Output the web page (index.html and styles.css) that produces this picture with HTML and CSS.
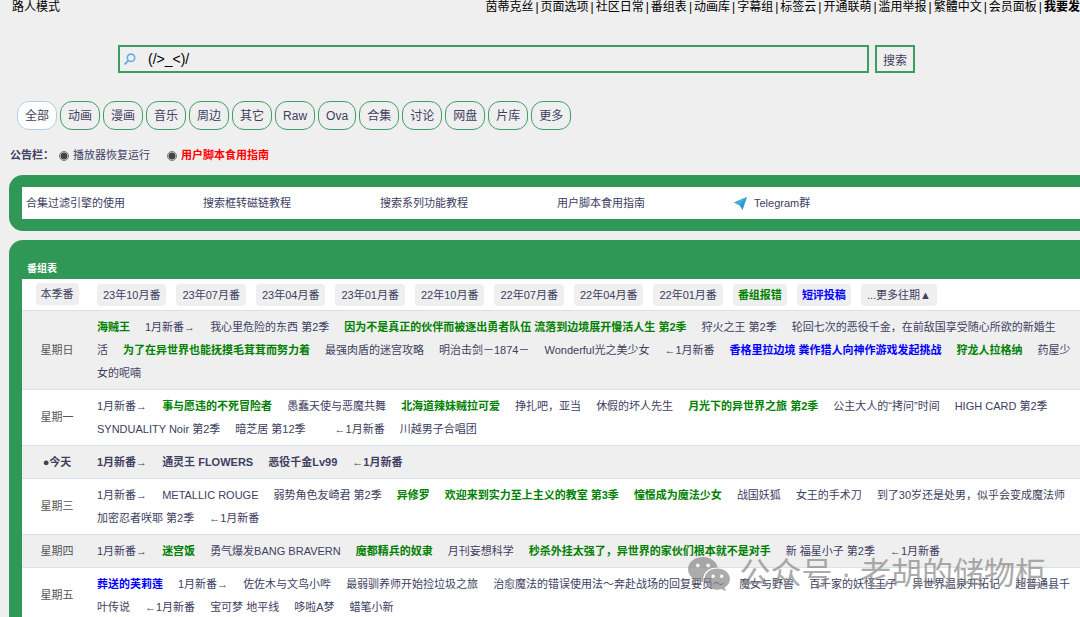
FILE: index.html
```html
<!DOCTYPE html>
<html lang="zh-CN">
<head>
<meta charset="utf-8">
<title>番组表</title>
<link rel="stylesheet" href="styles.css">
</head>
<body>
<header class="topbar">
  <span class="mode">路人模式</span>
  <nav class="topnav">
    <a href="#">茵蒂克丝</a><i>|</i><a href="#">页面选项</a><i>|</i><a href="#">社区日常</a><i>|</i><a href="#">番组表</a><i>|</i><a href="#">动画库</a><i>|</i><a href="#">字幕组</a><i>|</i><a href="#">标签云</a><i>|</i><a href="#">开通联萌</a><i>|</i><a href="#">滥用举报</a><i>|</i><a href="#">繁體中文</a><i>|</i><a href="#">会员面板</a><i>|</i><a href="#"><b>我要发</b></a>
  </nav>
</header>

<form class="search">
  <label class="search-box">
    <svg class="lens" viewBox="0 0 12 12" aria-hidden="true"><circle cx="7" cy="4.8" r="3.7" fill="#e4f1fc" stroke="#69ade8" stroke-width="1.6"/><path d="M4.300 7.600 1.200 10.800" stroke="#69ade8" stroke-width="2" stroke-linecap="round"/></svg>
    <input type="text" value="(/&gt;_&lt;)/" aria-label="搜索关键词">
  </label>
  <button class="search-btn" type="submit">搜索</button>
</form>

<div class="filters">
  <button class="pill active" type="button">全部</button>
  <button class="pill" type="button">动画</button>
  <button class="pill" type="button">漫画</button>
  <button class="pill" type="button">音乐</button>
  <button class="pill" type="button">周边</button>
  <button class="pill" type="button">其它</button>
  <button class="pill" type="button">Raw</button>
  <button class="pill" type="button">Ova</button>
  <button class="pill" type="button">合集</button>
  <button class="pill" type="button">讨论</button>
  <button class="pill" type="button">网盘</button>
  <button class="pill" type="button">片库</button>
  <button class="pill" type="button">更多</button>
</div>

<div class="bulletin">
  <b>公告栏：</b>
  <a href="#"><span class="dot"></span>播放器恢复运行</a>
  <a href="#" class="hot"><span class="dot"></span>用户脚本食用指南</a>
</div>

<section class="panel">
  <div class="guides">
    <a href="#">合集过滤引擎的使用</a>
    <a href="#">搜索框转磁链教程</a>
    <a href="#">搜索系列功能教程</a>
    <a href="#">用户脚本食用指南</a>
    <a href="#" class="telegram"><svg class="plane" viewBox="0 0 13 13" aria-hidden="true"><path d="M0 5.6 13 0 8.6 13 5.4 8.2Z" fill="#2b9bd3"/><path d="M0 5.6 13 0 5.4 8.2Z" fill="#45addb"/></svg>Telegram群</a>
  </div>
</section>

<section class="panel">
  <h2 class="panel-title">番组表</h2>
  <table class="schedule">
    <tbody>
      <tr>
        <th><a class="chip" href="#">本季番</a></th>
        <td><div class="chips">
          <a class="chip" href="#">23年10月番</a><a class="chip" href="#">23年07月番</a><a class="chip" href="#">23年04月番</a><a class="chip" href="#">23年01月番</a><a class="chip" href="#">22年10月番</a><a class="chip" href="#">22年07月番</a><a class="chip" href="#">22年04月番</a><a class="chip" href="#">22年01月番</a><a class="chip green" href="#">番组报错</a><a class="chip blue" href="#">短评投稿</a><a class="chip" href="#">...更多往期▲</a>
        </div></td>
      </tr>
      <tr>
        <th>星期日</th>
        <td class="shows"><a class="green" href="#">海贼王</a><a href="#">1月新番→</a><a href="#">我心里危险的东西 第2季</a><a class="green" href="#">因为不是真正的伙伴而被逐出勇者队伍 流落到边境展开慢活人生 第2季</a><a href="#">狩火之王 第2季</a><a href="#">轮回七次的恶役千金，在前敌国享受随心所欲的新婚生<br>活</a><a class="green" href="#">为了在异世界也能抚摸毛茸茸而努力着</a><a href="#">最强肉盾的迷宫攻略</a><a href="#">明治击剑－1874－</a><a href="#">Wonderful光之美少女</a><a href="#">←1月新番</a><a class="blue" href="#">香格里拉边境 粪作猎人向神作游戏发起挑战</a><a class="green" href="#">狩龙人拉格纳</a><a href="#">药屋少<br>女的呢喃</a></td>
      </tr>
      <tr>
        <th>星期一</th>
        <td class="shows"><a href="#">1月新番→</a><a class="green" href="#">事与愿违的不死冒险者</a><a href="#">愚蠢天使与恶魔共舞</a><a class="green" href="#">北海道辣妹贼拉可爱</a><a href="#">挣扎吧，亚当</a><a href="#">休假的坏人先生</a><a class="green" href="#">月光下的异世界之旅 第2季</a><a href="#">公主大人的“拷问”时间</a><a href="#">HIGH CARD 第2季</a><br><a href="#">SYNDUALITY Noir 第2季</a><a class="wide" href="#">暗芝居 第12季</a><a href="#">←1月新番</a><a href="#">川越男子合唱团</a></td>
      </tr>
      <tr class="today">
        <th>●今天</th>
        <td class="shows"><a href="#">1月新番→</a><a href="#">通灵王 FLOWERS</a><a href="#">恶役千金Lv99</a><a href="#">←1月新番</a></td>
      </tr>
      <tr>
        <th>星期三</th>
        <td class="shows"><a href="#">1月新番→</a><a href="#">METALLIC ROUGE</a><a href="#">弱势角色友崎君 第2季</a><a class="green" href="#">异修罗</a><a class="green" href="#">欢迎来到实力至上主义的教室 第3季</a><a class="green" href="#">憧憬成为魔法少女</a><a href="#">战国妖狐</a><a href="#">女王的手术刀</a><a href="#">到了30岁还是处男，似乎会变成魔法师</a><br><a href="#">加密忍者咲耶 第2季</a><a href="#">←1月新番</a></td>
      </tr>
      <tr>
        <th>星期四</th>
        <td class="shows"><a href="#">1月新番→</a><a class="green" href="#">迷宫饭</a><a href="#">勇气爆发BANG BRAVERN</a><a class="green" href="#">魔都精兵的奴隶</a><a href="#">月刊妄想科学</a><a class="green" href="#">秒杀外挂太强了，异世界的家伙们根本就不是对手</a><a href="#">新 福星小子 第2季</a><a href="#">←1月新番</a></td>
      </tr>
      <tr>
        <th>星期五</th>
        <td class="shows"><a class="blue" href="#">葬送的芙莉莲</a><a href="#">1月新番→</a><a href="#">佐佐木与文鸟小哔</a><a href="#">最弱驯养师开始捡垃圾之旅</a><a href="#">治愈魔法的错误使用法～奔赴战场的回复要员～</a><a href="#">魔女与野兽</a><a href="#">百千家的妖怪王子</a><a href="#">异世界温泉开拓记</a><a href="#">超普通县千<br>叶传说</a><a href="#">←1月新番</a><a href="#">宝可梦 地平线</a><a href="#">哆啦A梦</a><a href="#">蜡笔小新</a></td>
      </tr>
    </tbody>
  </table>
</section>

<div class="watermark">
  <svg class="wechat" viewBox="0 0 42 36" aria-hidden="true">
    <path fill="#888" fill-rule="evenodd" d="M15 1C6.500 1 0 6.400 0 13.300c0 3.900 2.100 7.200 5.300 9.500L4 27.500l5.200-2.700c1.800.6 3.800.9 5.800.9h.8c-.3-1-.5-2-.5-3 0-6.500 6-11.300 13.700-11.300h.8C28.500 5.400 22.300 1 15 1ZM9.800 7.500a2 2 0 1 1 0 4 2 2 0 0 1 0-4Zm10.400 0a2 2 0 1 1 0 4 2 2 0 0 1 0-4Z"/>
    <path fill="#888" fill-rule="evenodd" d="M29.300 12.500c-7 0-12.700 4.700-12.700 10.600s5.700 10.600 12.700 10.600c1.500 0 3-.2 4.300-.6l4.200 2.200-1.100-3.800c3.200-2 5.300-5 5.300-8.400 0-5.900-5.700-10.600-12.700-10.600Zm-4.200 6a1.700 1.700 0 1 1 0 3.400 1.700 1.700 0 0 1 0-3.400Zm8.600 0a1.700 1.700 0 1 1 0 3.400 1.700 1.700 0 0 1 0-3.400Z"/>
  </svg>
  <span>公众号 · 老胡的储物柜</span>
</div>
</body>
</html>
```

FILE: styles.css
```css
* { box-sizing: border-box; }

html { overflow: hidden; }

body {
  margin: 0;
  height: 100vh;
  overflow: hidden;
  background: #efefef;
  color: #404060;
  font: 11px/23px "Liberation Sans", "Noto Sans CJK SC", sans-serif;
}

a { color: inherit; text-decoration: none; }

button, input { font: inherit; color: inherit; }

.topbar {
  display: flex;
  justify-content: space-between;
  height: 18px;
  padding-left: 12px;
  color: #000;
  font-size: 12px;
  line-height: 14px;
  white-space: nowrap;
}

.topnav { display: flex; }
.topnav i { padding: 0 2px; font-style: normal; }

.search {
  display: flex;
  gap: 6px;
  margin: 27px 165px 0 118px;
}

.search-box {
  display: flex;
  flex: 1;
  align-items: center;
  gap: 12px;
  height: 28px;
  padding-left: 4px;
  border: 2px solid #3a9e62;
}

.lens { width: 12px; height: 12px; }

.search-box input {
  flex: 1;
  min-width: 0;
  padding: 0;
  border: 0;
  outline: 0;
  background: none;
  color: #000;
  font-size: 14px;
}

.search-btn {
  padding: 5px 6px 0;
  border: 2px solid #3a9e62;
  background: none;
  font-size: 12px;
  line-height: 19px;
}

.filters {
  display: flex;
  gap: 3px;
  margin: 28px 0 0 17px;
}

.pill {
  height: 29px;
  padding: 1px 7px 0;
  border: 1px solid #3da067;
  border-radius: 12px;
  background: none;
  font-size: 12px;
  line-height: 26px;
}

.pill.active { border-color: #b0cfe2; background: #fff; }

.bulletin {
  display: flex;
  margin: 14px 0 8px 10px;
}

.bulletin b { width: 49px; }
.bulletin a { display: flex; align-items: center; gap: 4px; margin-right: 17px; }
.bulletin .hot { color: #f00; font-weight: bold; }

.dot {
  width: 10px;
  height: 10px;
  border: 1px solid #777;
  border-radius: 50%;
  background: radial-gradient(#444 0 3px, #efefef 4px);
}

.panel {
  margin: 0 -14px 9px 9px;
  padding: 12px 12px 12px 13px;
  border-radius: 14px;
  background: #2f9856;
}

.guides {
  display: grid;
  grid-template-columns: repeat(5, 177px);
  padding-left: 4px;
  background: #fff;
  line-height: 32px;
}

.telegram { display: flex; align-items: center; gap: 7px; }
.plane { width: 13px; height: 13px; }

.panel-title {
  margin: 7px 0 0 5px;
  color: #fff;
  font-size: 10px;
  line-height: 20px;
}

.schedule {
  width: 100%;
  table-layout: fixed;
  border-collapse: collapse;
  background: #fff;
}

.schedule tr { border-bottom: 1px solid #d3e3ea; }
.schedule tr:nth-child(even) { background: #efefef; }
.schedule th { width: 70px; padding: 0; color: #555; font-weight: normal; }
.schedule td { padding: 5px 5px 4px; }
.schedule .today, .schedule .today th { color: #404060; font-weight: bold; }

.chips { display: flex; gap: 10px; }

.chip {
  padding: 0 5px;
  border-radius: 4px;
  background: #efefef;
  color: #404060;
  line-height: 22px;
  white-space: nowrap;
}

.chips .chip { padding: 0 6px; }
.chips .green, .chips .blue { padding: 0 5px; }
.schedule th .chip { display: inline-block; }

.shows { white-space: nowrap; }
.shows a { margin-right: 15px; }
.shows .wide { margin-right: 29px; }

.green { color: #008000; font-weight: bold; }
.blue { color: #00f; font-weight: bold; }
.chip.green { color: #008000; }
.chip.blue { color: #00f; }

.watermark {
  position: absolute;
  right: 34px;
  bottom: 21px;
  display: flex;
  align-items: center;
  gap: 9px;
  color: #888;
  font: 400 31px/44px "Liberation Sans", "Noto Sans CJK SC", sans-serif;
  opacity: 0.7;
  white-space: nowrap;
}

.wechat { width: 42px; height: 36px; }
```
